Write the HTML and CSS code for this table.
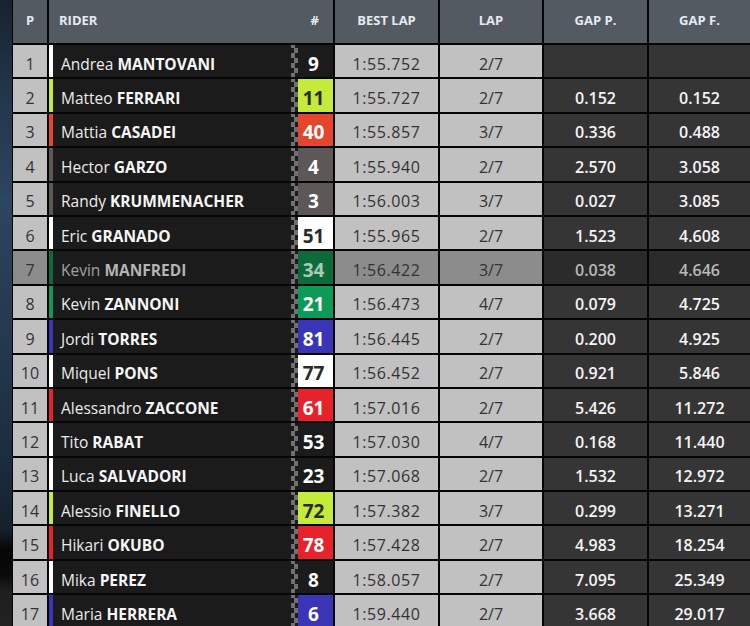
FILE: index.html
```html
<!DOCTYPE html>
<html>
<head>
<meta charset="utf-8">
<link rel="stylesheet" href="styles.css">
</head>
<body>
<div class="page">
  <div class="backdrop"></div>
  <div class="board">
    <div class="hd hd-p">P</div>
    <div class="hd hd-rider"><span>RIDER</span><span class="hash">#</span></div>
    <div class="hd">BEST LAP</div>
    <div class="hd">LAP</div>
    <div class="hd">GAP P.</div>
    <div class="hd">GAP F.</div>

    <div class="pos">1</div>
    <div class="rider"><i class="stripe c-white"></i><span class="name">Andrea <b>MANTOVANI</b></span><i class="flag"></i><span class="num c-black">9</span></div>
    <div class="time">1:55.752</div><div class="lap">2/7</div><div class="gap"></div><div class="gap"></div>

    <div class="pos">2</div>
    <div class="rider"><i class="stripe c-lime"></i><span class="name">Matteo <b>FERRARI</b></span><i class="flag"></i><span class="num c-lime">11</span></div>
    <div class="time">1:55.727</div><div class="lap">2/7</div><div class="gap">0.152</div><div class="gap">0.152</div>

    <div class="pos">3</div>
    <div class="rider"><i class="stripe c-orange"></i><span class="name">Mattia <b>CASADEI</b></span><i class="flag"></i><span class="num c-orange">40</span></div>
    <div class="time">1:55.857</div><div class="lap">3/7</div><div class="gap">0.336</div><div class="gap">0.488</div>

    <div class="pos">4</div>
    <div class="rider"><i class="stripe c-grey"></i><span class="name">Hector <b>GARZO</b></span><i class="flag"></i><span class="num c-grey">4</span></div>
    <div class="time">1:55.940</div><div class="lap">2/7</div><div class="gap">2.570</div><div class="gap">3.058</div>

    <div class="pos">5</div>
    <div class="rider"><i class="stripe c-grey"></i><span class="name">Randy <b>KRUMMENACHER</b></span><i class="flag"></i><span class="num c-grey">3</span></div>
    <div class="time">1:56.003</div><div class="lap">3/7</div><div class="gap">0.027</div><div class="gap">3.085</div>

    <div class="pos">6</div>
    <div class="rider"><i class="stripe c-white"></i><span class="name">Eric <b>GRANADO</b></span><i class="flag"></i><span class="num c-white">51</span></div>
    <div class="time">1:55.965</div><div class="lap">2/7</div><div class="gap">1.523</div><div class="gap">4.608</div>

    <div class="pos dim">7</div>
    <div class="rider dim"><i class="stripe c-dkgreen"></i><span class="name">Kevin <b>MANFREDI</b></span><i class="flag"></i><span class="num c-dkgreen">34</span></div>
    <div class="time dim">1:56.422</div><div class="lap dim">3/7</div><div class="gap dim">0.038</div><div class="gap dim">4.646</div>

    <div class="pos">8</div>
    <div class="rider"><i class="stripe c-green"></i><span class="name">Kevin <b>ZANNONI</b></span><i class="flag"></i><span class="num c-green">21</span></div>
    <div class="time">1:56.473</div><div class="lap">4/7</div><div class="gap">0.079</div><div class="gap">4.725</div>

    <div class="pos">9</div>
    <div class="rider"><i class="stripe c-blue"></i><span class="name">Jordi <b>TORRES</b></span><i class="flag"></i><span class="num c-blue">81</span></div>
    <div class="time">1:56.445</div><div class="lap">2/7</div><div class="gap">0.200</div><div class="gap">4.925</div>

    <div class="pos">10</div>
    <div class="rider"><i class="stripe c-white"></i><span class="name">Miquel <b>PONS</b></span><i class="flag"></i><span class="num c-white">77</span></div>
    <div class="time">1:56.452</div><div class="lap">2/7</div><div class="gap">0.921</div><div class="gap">5.846</div>

    <div class="pos">11</div>
    <div class="rider"><i class="stripe c-red"></i><span class="name">Alessandro <b>ZACCONE</b></span><i class="flag"></i><span class="num c-red">61</span></div>
    <div class="time">1:57.016</div><div class="lap">2/7</div><div class="gap">5.426</div><div class="gap">11.272</div>

    <div class="pos">12</div>
    <div class="rider"><i class="stripe c-white"></i><span class="name">Tito <b>RABAT</b></span><i class="flag"></i><span class="num c-black">53</span></div>
    <div class="time">1:57.030</div><div class="lap">4/7</div><div class="gap">0.168</div><div class="gap">11.440</div>

    <div class="pos">13</div>
    <div class="rider"><i class="stripe c-white"></i><span class="name">Luca <b>SALVADORI</b></span><i class="flag"></i><span class="num c-black">23</span></div>
    <div class="time">1:57.068</div><div class="lap">2/7</div><div class="gap">1.532</div><div class="gap">12.972</div>

    <div class="pos">14</div>
    <div class="rider"><i class="stripe c-lime"></i><span class="name">Alessio <b>FINELLO</b></span><i class="flag"></i><span class="num c-lime">72</span></div>
    <div class="time">1:57.382</div><div class="lap">3/7</div><div class="gap">0.299</div><div class="gap">13.271</div>

    <div class="pos">15</div>
    <div class="rider"><i class="stripe c-red"></i><span class="name">Hikari <b>OKUBO</b></span><i class="flag"></i><span class="num c-red">78</span></div>
    <div class="time">1:57.428</div><div class="lap">2/7</div><div class="gap">4.983</div><div class="gap">18.254</div>

    <div class="pos">16</div>
    <div class="rider"><i class="stripe c-white"></i><span class="name">Mika <b>PEREZ</b></span><i class="flag"></i><span class="num c-black">8</span></div>
    <div class="time">1:58.057</div><div class="lap">2/7</div><div class="gap">7.095</div><div class="gap">25.349</div>

    <div class="pos">17</div>
    <div class="rider"><i class="stripe c-blue"></i><span class="name">Maria <b>HERRERA</b></span><i class="flag"></i><span class="num c-blue">6</span></div>
    <div class="time">1:59.440</div><div class="lap">2/7</div><div class="gap">3.668</div><div class="gap">29.017</div>
  </div>
</div>
</body>
</html>
```
FILE: styles.css
```css
html, body {
  margin: 0;
  padding: 0;
  background: #050505;
  overflow: hidden;
}
body {
  font-family: "Open Sans", "Noto Sans", sans-serif;
  width: 750px;
  height: 626px;
}
.page {
  display: flex;
  height: 626px;
}
.backdrop {
  width: 12px;
  flex: none;
  background: linear-gradient(180deg, #18222e 0px, #22354a 90px, #2c4560 200px, #25394f 330px, #1d2d40 450px, #15202c 530px, #060606 550px, #0a0a0a 575px, #1e1e1e 590px, #222 626px);
}
.board {
  flex: 1;
  padding-left: 1px;
  display: grid;
  grid-template-columns: 34px 284px 103px 102px 103px 101px;
  grid-template-rows: 43px repeat(17, 32.4px);
  column-gap: 2px;
  row-gap: 2px;
  background: #050505;
  align-content: start;
}
.hd {
  background: #535a62;
  color: #e4ebf0;
  font-weight: 700;
  font-size: 13px;
  display: flex;
  align-items: center;
  justify-content: center;
  padding-bottom: 3px;
  box-sizing: border-box;
}
.hd-rider {
  justify-content: space-between;
  padding-left: 10px;
  padding-right: 14px;
}
.pos, .time, .lap, .gap, .name, .num {
  padding-top: 5px;
  box-sizing: border-box;
}
.pos, .time, .lap {
  background: #c1c1c1;
  color: #333;
  font-size: 16px;
  display: flex;
  align-items: center;
  justify-content: center;
}
.time {
  letter-spacing: 0.6px;
}
.gap {
  background: #353535;
  color: #f4f4f4;
  font-size: 16px;
  font-weight: 600;
  display: flex;
  align-items: center;
  justify-content: center;
}
.rider {
  display: flex;
  background: #1b1b1b;
}
.stripe {
  width: 4px;
  flex: none;
}
.name {
  flex: 1;
  display: flex;
  align-items: center;
  padding-left: 8px;
  color: #ececec;
  font-size: 15.5px;
  white-space: pre;
}
.name b {
  font-weight: 700;
  color: #f6f6f6;
}
.flag {
  width: 7px;
  flex: none;
  background-color: #1b1b1b;
  background-image: conic-gradient(#707070 25%, transparent 0 50%, #707070 0 75%, transparent 0);
  background-size: 7px 10px;
  background-position: 0 3px;
}
.num {
  width: 35px;
  flex: none;
  display: flex;
  align-items: center;
  justify-content: center;
  padding-right: 4px;
  font-size: 19px;
  font-weight: 700;
  color: #fff;
}
.c-white { background: #ffffff; }
.num.c-white { color: #2a2a2a; }
.c-black { background: #1b1b1b; }
.c-lime { background: #c4ea3a; }
.num.c-lime { color: #2a2a2a; }
.c-orange { background: #e5442d; }
.c-grey { background: #5d5857; }
.c-dkgreen { background: #0c6a3b; }
.num.c-dkgreen { color: #a9cab6; }
.c-green { background: #0d9a56; }
.c-blue { background: #3a35b6; }
.c-red { background: #e8222b; }

.pos.dim, .time.dim, .lap.dim { background: #8c8c8c; }
.gap.dim { background: #2b2b2b; color: #b9b9b9; }
.rider.dim .name { color: #a2a2a2; }
.rider.dim .name b { color: #b4b4b4; }
```
